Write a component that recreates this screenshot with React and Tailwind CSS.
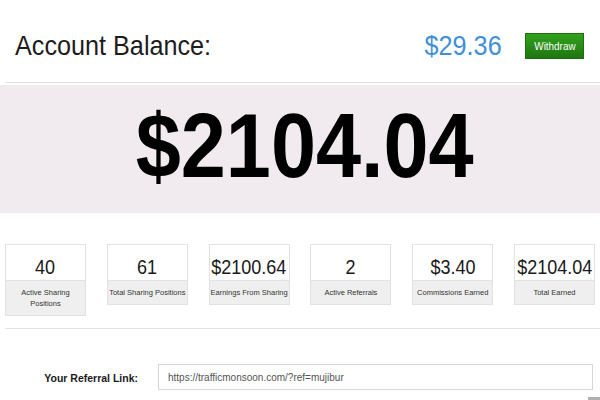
export default function App() {
  const cards = [
    { v: "40", l: ["Active Sharing", "Positions"] },
    { v: "61", l: ["Total Sharing Positions"] },
    { v: "$2100.64", l: ["Earnings From Sharing"] },
    { v: "2", l: ["Active Referrals"] },
    { v: "$3.40", l: ["Commissions Earned"] },
    { v: "$2104.04", l: ["Total Earned"] },
  ];
  return (
    <div className="w-[600px] h-[400px] overflow-hidden bg-white font-['Liberation_Sans',Arial,sans-serif]">
      {/* header */}
      <div className="pt-[33px] pb-[23px] pl-[15px] pr-[16px]">
        <div className="flex items-center h-[26px]">
          <span className="inline-block text-[28px] leading-[28px] text-[#1c1c1c] whitespace-nowrap scale-x-90 origin-left">
            Account Balance:
          </span>
          <span className="ml-auto mr-[23px] inline-block text-[28px] leading-[28px] text-[#4190d6] whitespace-nowrap scale-x-90 origin-right">
            $29.36
          </span>
          <button className="h-[26px] w-[59px] border border-[#1c6e0f] bg-gradient-to-b from-[#32a21d] to-[#1f7612] text-white text-[11px] leading-none flex items-center justify-center">
            <span className="inline-block scale-x-90 whitespace-nowrap">Withdraw</span>
          </button>
        </div>
      </div>
      <div className="ml-[5px] border-t border-[#e3e3e3]"></div>
      {/* big band */}
      <div className="mt-[2px] h-[128px] bg-[#f1ebef] pt-[16px] pl-[10px] flex justify-center">
        <span className="inline-block text-[90px] leading-[90px] font-bold text-black whitespace-nowrap scale-x-90 origin-center">
          $2104.04
        </span>
      </div>
      {/* cards */}
      <div className="mt-[31px] px-[5px] flex justify-between items-start">
        {cards.map((c, i) => (
          <div key={i} className="w-[81px] border border-[#e2e2e2] bg-[#efefef]">
            <div className="h-[36px] pt-[12px] bg-white flex justify-center border-b border-[#e2e2e2]">
              <span className="inline-block text-[20px] leading-[20px] text-[#1a1a1a] whitespace-nowrap scale-x-90 origin-center">
                {c.v}
              </span>
            </div>
            <div className="py-[6px] text-center text-[7.5px] leading-[11px] text-[#333]">
              {c.l.map((t, j) => (
                <div key={j} className="whitespace-nowrap">{t}</div>
              ))}
            </div>
          </div>
        ))}
      </div>
      <div className="mt-[12px] ml-[5px] border-t border-[#e3e3e3]"></div>
      {/* referral */}
      <div className="mt-[35px] flex items-center">
        <div className="w-[138px] pt-[3px] text-right text-[10.5px] font-bold text-[#1a1a1a] whitespace-nowrap">
          Your Referral Link:
        </div>
        <div className="ml-[20px] w-[435px] h-[26px] border border-[#d6d6d6] flex items-center pl-[9px] text-[10px] text-[#555]">
          https://trafficmonsoon.com/?ref=mujibur
        </div>
      </div>
      <div className="mt-[7px] ml-auto w-[12px] h-[3px] bg-[#b0b0b0]"></div>
    </div>
  );
}
